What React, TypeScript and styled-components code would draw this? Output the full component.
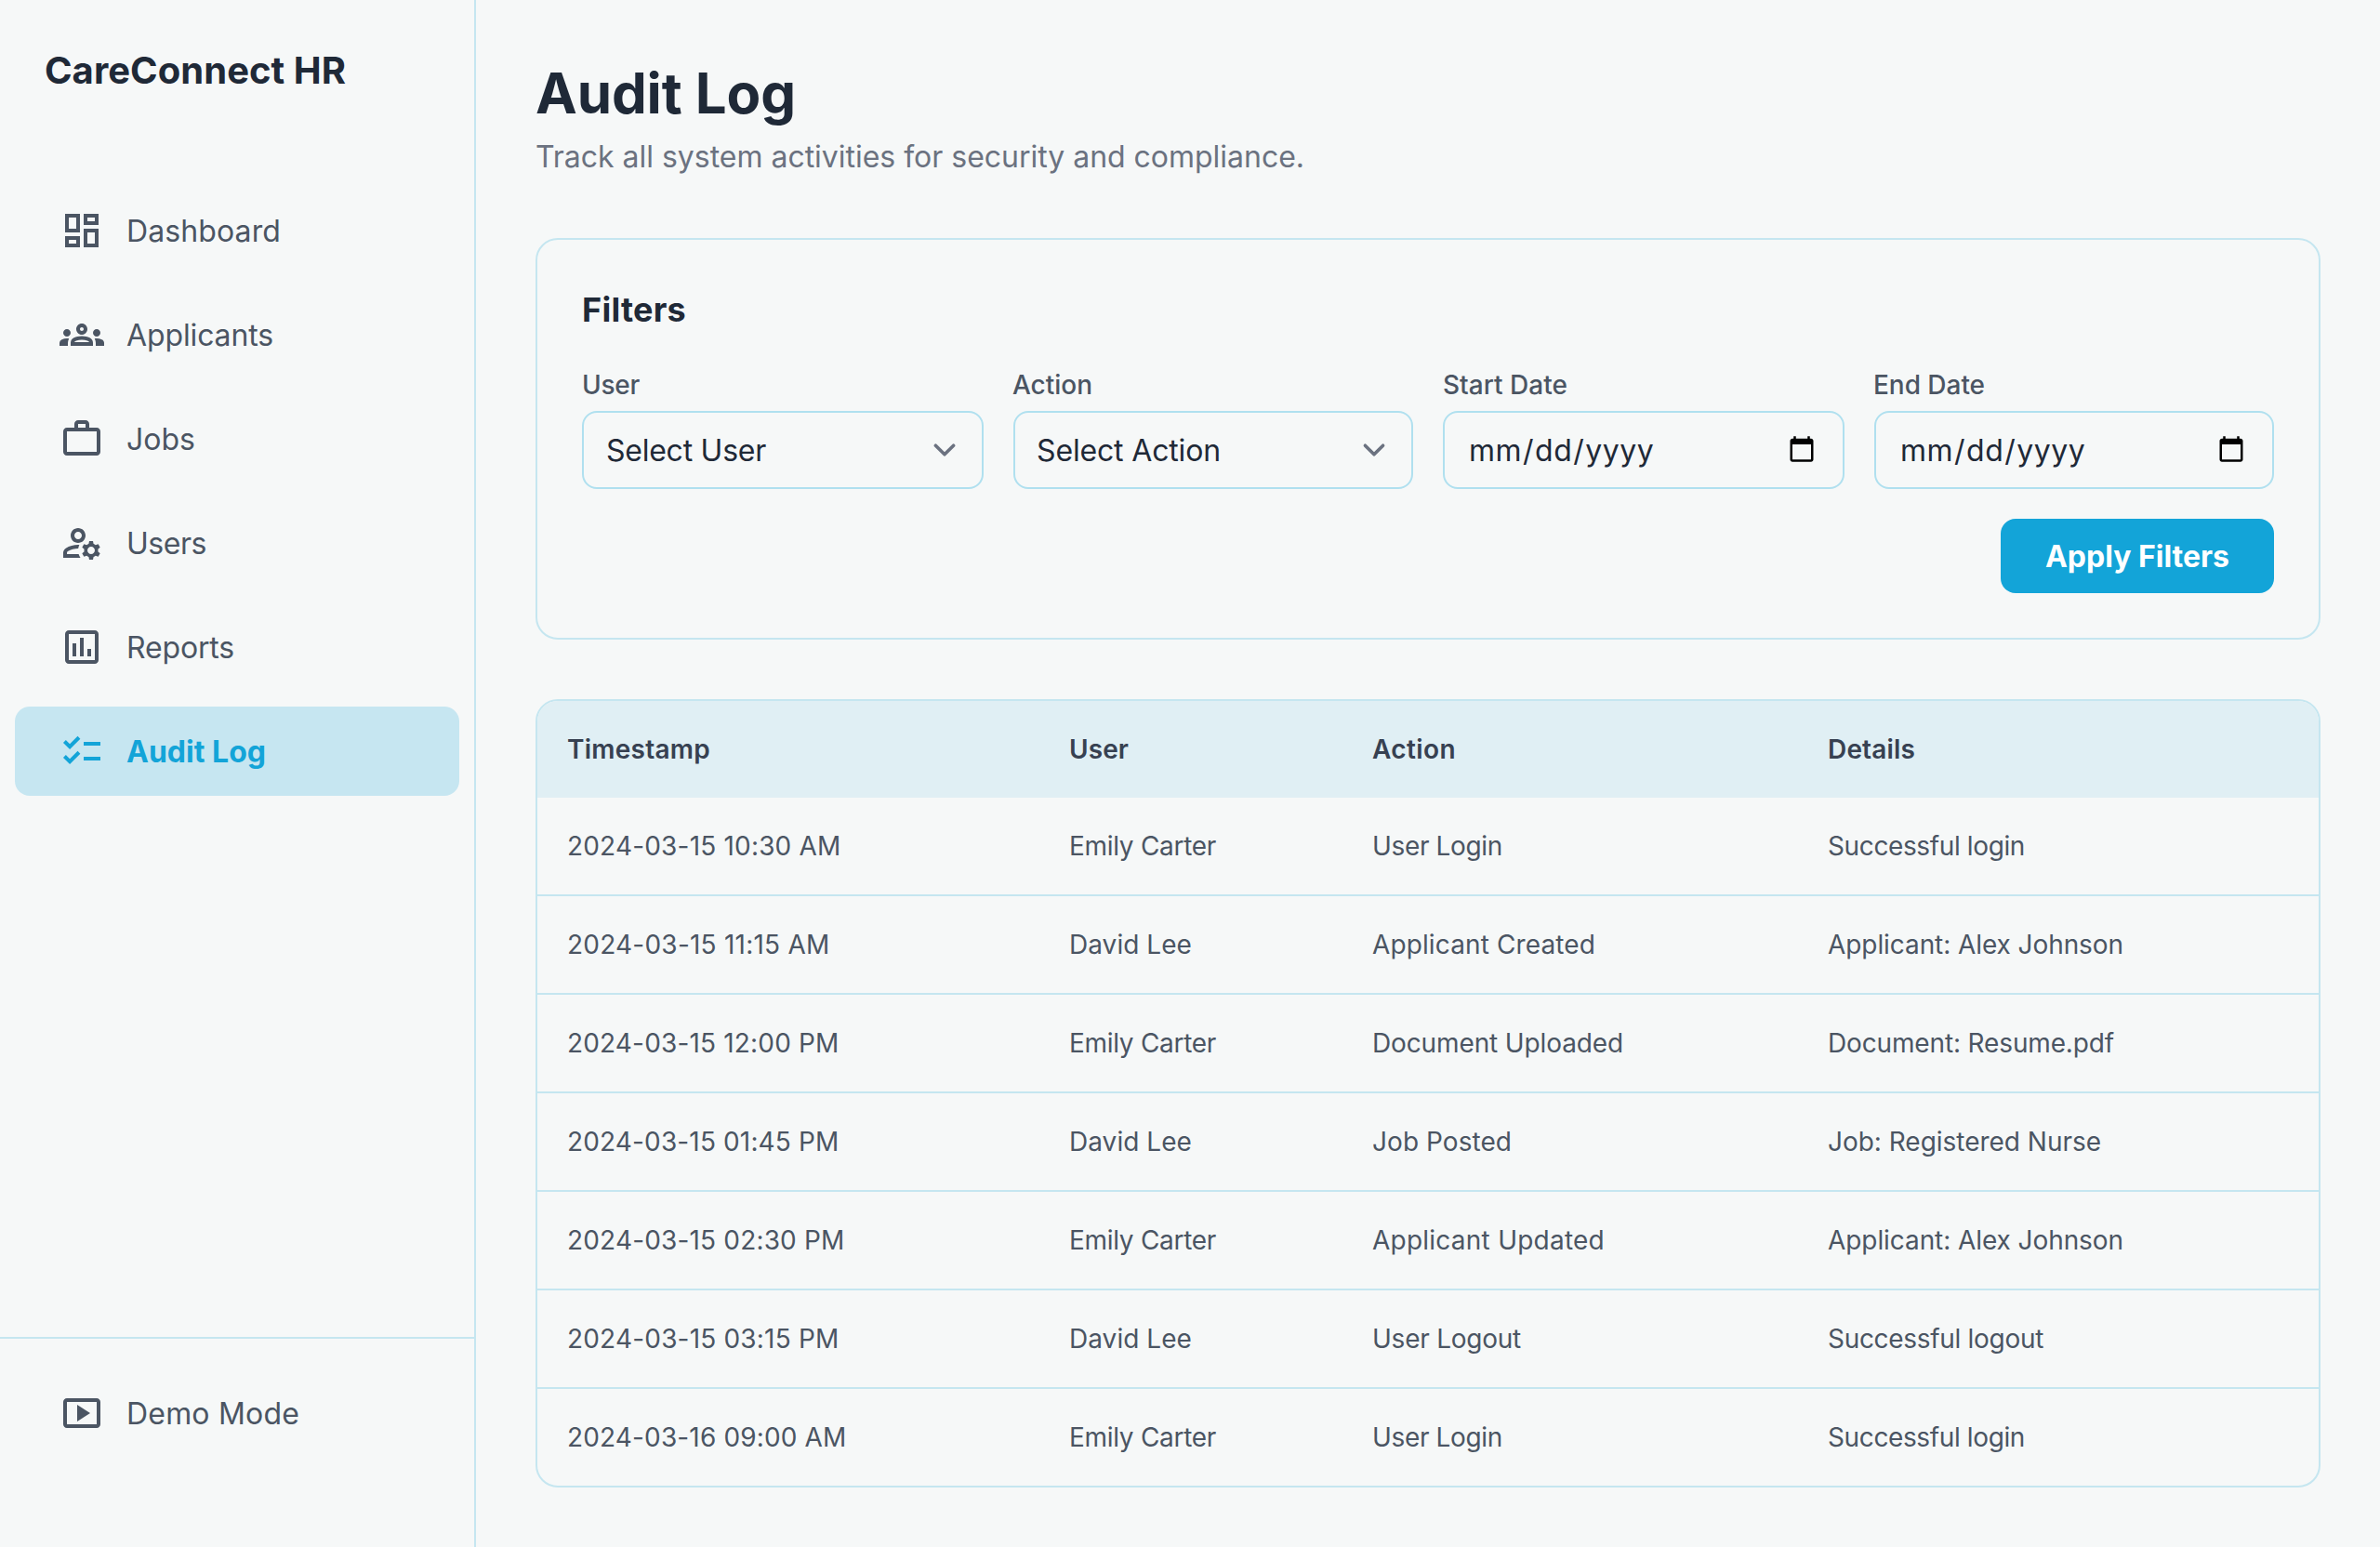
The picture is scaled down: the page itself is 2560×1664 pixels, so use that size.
import React, { useLayoutEffect, useRef } from "react";
import styled, { createGlobalStyle } from "styled-components";
import {
  MdOutlineDashboard,
  MdOutlineGroups,
  MdWorkOutline,
  MdOutlineManageAccounts,
  MdOutlineAssessment,
  MdChecklist,
  MdOutlineSmartDisplay,
} from "react-icons/md";

const GlobalStyle = createGlobalStyle`
  html, body { margin: 0; padding: 0; background: #f6f8f8; }
  body { font-family: Inter, "Noto Sans", sans-serif; color: #1f2937; }
  * { box-sizing: border-box; }
`;

/* The design was laid out at half size with whole-pixel glyph advances and then
   doubled. This spreads each string evenly so that it takes that same width. */
function useDoubledAdvances<T extends HTMLElement>(text: string, nudge = 0) {
  const ref = useRef<T>(null);
  useLayoutEffect(() => {
    const el = ref.current;
    const ctx = document.createElement("canvas").getContext("2d");
    if (!el || !ctx) return;
    const cs = getComputedStyle(el);
    const size = parseFloat(cs.fontSize);
    ctx.font = `${cs.fontWeight} ${size}px ${cs.fontFamily}`;
    const natural = ctx.measureText(text).width;
    ctx.font = `${cs.fontWeight} ${size / 2}px ${cs.fontFamily}`;
    let target = nudge;
    for (const ch of text) target += Math.round(ctx.measureText(ch).width) * 2;
    el.style.letterSpacing = `${(target - natural) / text.length}px`;
  }, [text, nudge]);
  return ref;
}

function Txt({ children, nudge }: { children: string; nudge?: number }) {
  const ref = useDoubledAdvances<HTMLSpanElement>(children, nudge);
  return <span ref={ref}>{children}</span>;
}

const Shell = styled.div`
  display: flex;
  width: 2560px;
  height: 1664px;
  overflow: hidden;
  background: #f6f8f8;
`;

const Sidebar = styled.aside`
  width: 512px;
  flex: none;
  display: flex;
  flex-direction: column;
  border-right: 2px solid #c5e6f0;
`;

const Logo = styled.div`
  padding: 48px 48px 0;
  height: 200px;
  font-size: 40px;
  line-height: 56px;
  font-weight: 700;
  color: #1f2937;
`;

const Nav = styled.nav`
  flex: 1;
  display: flex;
  flex-direction: column;
  gap: 16px;
  padding: 0 16px;
`;

const NavItem = styled.a<{ $active?: boolean }>`
  display: flex;
  align-items: center;
  gap: 24px;
  height: 96px;
  padding: 0 48px;
  border-radius: 16px;
  font-size: 32px;
  line-height: 48px;
  font-weight: ${(p) => (p.$active ? 700 : 400)};
  color: ${(p) => (p.$active ? "#13a4d8" : "#4b5563")};
  background: ${(p) => (p.$active ? "#c6e6f1" : "transparent")};
  svg { flex: none; width: 48px; height: 48px; }
`;

const NavLabel = styled.span`
  padding-top: 2px;
`;

const SidebarFooter = styled.div`
  border-top: 2px solid #c5e6f0;
  padding: 32px 16px 96px;
`;

const Main = styled.main`
  flex: 1;
  min-width: 0;
  padding: 64px;
`;

const PageTitle = styled.h1`
  margin: 0;
  font-size: 60px;
  line-height: 72px;
  font-weight: 700;
  color: #1f2937;
`;

const Subtitle = styled.p`
  margin: 8px 0 64px;
  padding-top: 1px;
  height: 48px;
  font-size: 32px;
  line-height: 48px;
  color: #6b7280;
`;

const FilterCard = styled.section`
  border: 2px solid #c5e6f0;
  border-radius: 24px;
  padding: 48px;
  margin-bottom: 64px;
`;

const FilterTitle = styled.h2`
  margin: 0 0 34px;
  font-size: 36px;
  line-height: 54px;
  font-weight: 700;
  color: #1f2937;
`;

const FilterGrid = styled.div`
  display: grid;
  grid-template-columns: 432px 430px 432px 430px;
  gap: 32px;
`;

const Field = styled.label`
  display: flex;
  flex-direction: column;
  gap: 8px;
  min-width: 0;
`;

const FieldLabel = styled.span<{ $snapped?: boolean }>`
  margin-left: ${(p) => (p.$snapped ? "-1px" : "0")};
  font-size: 28px;
  line-height: 40px;
  font-weight: 500;
  color: #4b5563;
`;

const controlStyle = `
  width: 100%;
  height: 84px;
  border: 2px solid #b0e0ef;
  border-radius: 16px;
  background-color: #f6f8f8;
  color: #1f2937;
  font-family: Inter, "Noto Sans", sans-serif;
  font-size: 32px;
  margin: 0;
  outline: none;
`;

const SelectBox = styled.select<{ $snapped?: boolean }>`
  ${controlStyle}
  padding: 0 24px 0 ${(p) => (p.$snapped ? "23px" : "24px")};
  appearance: none;
  background-image: url("data:image/svg+xml,%3csvg xmlns='http://www.w3.org/2000/svg' fill='none' viewBox='0 0 20 20'%3e%3cpath stroke='%236b7280' stroke-linecap='round' stroke-linejoin='round' stroke-width='1.5' d='M6 8l4 4 4-4'/%3e%3c/svg%3e");
  background-position: right 16px center;
  background-repeat: no-repeat;
  background-size: 48px 48px;
`;

const DateInput = styled.input`
  ${controlStyle}
  padding: 0 24px 0 25px;
  letter-spacing: 0.5px;
  &::-webkit-calendar-picker-indicator {
    width: 32px;
    height: 32px;
    margin: 0 4px 0 0;
    padding: 0;
  }
`;

const Actions = styled.div`
  display: flex;
  justify-content: flex-end;
  margin-top: 32px;
`;

const ApplyButton = styled.button`
  height: 80px;
  padding: 0 48px;
  border: none;
  border-radius: 16px;
  background: #13a4d8;
  color: #ffffff;
  font-family: Inter, "Noto Sans", sans-serif;
  font-size: 32px;
  font-weight: 700;
`;

const TableCard = styled.section`
  border: 2px solid #c5e6f0;
  border-radius: 24px;
  overflow: hidden;
`;

const Table = styled.table`
  width: 100%;
  table-layout: fixed;
  border-collapse: collapse;
`;

const HeadRow = styled.tr`
  background: #e0eff4;
`;

const HeadCell = styled.th<{ $width?: number }>`
  width: ${(p) => (p.$width ? `${p.$width}px` : "auto")};
  padding: 32px;
  text-align: left;
  font-size: 28px;
  line-height: 40px;
  font-weight: 600;
  color: #374151;
`;

const Row = styled.tr`
  border-top: 2px solid #c5e6f0;
  &:first-child { border-top: none; }
`;

const Cell = styled.td`
  padding: 32px;
  font-size: 28px;
  line-height: 40px;
  color: #4b5563;
`;

function Select({ label, snapped }: { label: string; snapped?: boolean }) {
  const ref = useDoubledAdvances<HTMLSelectElement>(label);
  return (
    <SelectBox ref={ref} defaultValue="" $snapped={snapped}>
      <option value="">{label}</option>
    </SelectBox>
  );
}

const rows = [
  ["2024-03-15 10:30 AM", "Emily Carter", "User Login", "Successful login"],
  ["2024-03-15 11:15 AM", "David Lee", "Applicant Created", "Applicant: Alex Johnson"],
  ["2024-03-15 12:00 PM", "Emily Carter", "Document Uploaded", "Document: Resume.pdf"],
  ["2024-03-15 01:45 PM", "David Lee", "Job Posted", "Job: Registered Nurse"],
  ["2024-03-15 02:30 PM", "Emily Carter", "Applicant Updated", "Applicant: Alex Johnson"],
  ["2024-03-15 03:15 PM", "David Lee", "User Logout", "Successful logout"],
  ["2024-03-16 09:00 AM", "Emily Carter", "User Login", "Successful login"],
];

const navItems = [
  { label: "Dashboard", icon: <MdOutlineDashboard /> },
  { label: "Applicants", icon: <MdOutlineGroups /> },
  { label: "Jobs", icon: <MdWorkOutline /> },
  { label: "Users", icon: <MdOutlineManageAccounts /> },
  { label: "Reports", icon: <MdOutlineAssessment /> },
  { label: "Audit Log", icon: <MdChecklist />, active: true },
];

export default function App() {
  return (
    <Shell>
      <GlobalStyle />
      <Sidebar>
        <Logo><Txt>CareConnect HR</Txt></Logo>
        <Nav>
          {navItems.map((n) => (
            <NavItem key={n.label} $active={n.active}>
              {n.icon}
              <NavLabel><Txt>{n.label}</Txt></NavLabel>
            </NavItem>
          ))}
        </Nav>
        <SidebarFooter>
          <NavItem>
            <MdOutlineSmartDisplay />
            <NavLabel><Txt>Demo Mode</Txt></NavLabel>
          </NavItem>
        </SidebarFooter>
      </Sidebar>
      <Main>
        <PageTitle><Txt>Audit Log</Txt></PageTitle>
        <Subtitle><Txt nudge={-3}>Track all system activities for security and compliance.</Txt></Subtitle>
        <FilterCard>
          <FilterTitle><Txt>Filters</Txt></FilterTitle>
          <FilterGrid>
            <Field>
              <FieldLabel><Txt>User</Txt></FieldLabel>
              <Select label="Select User" />
            </Field>
            <Field>
              <FieldLabel $snapped><Txt>Action</Txt></FieldLabel>
              <Select label="Select Action" snapped />
            </Field>
            <Field>
              <FieldLabel><Txt>Start Date</Txt></FieldLabel>
              <DateInput type="date" />
            </Field>
            <Field>
              <FieldLabel $snapped><Txt>End Date</Txt></FieldLabel>
              <DateInput type="date" />
            </Field>
          </FilterGrid>
          <Actions>
            <ApplyButton><Txt>Apply Filters</Txt></ApplyButton>
          </Actions>
        </FilterCard>
        <TableCard>
          <Table>
            <thead>
              <HeadRow>
                <HeadCell $width={540}><Txt>Timestamp</Txt></HeadCell>
                <HeadCell $width={326}><Txt>User</Txt></HeadCell>
                <HeadCell $width={490}><Txt>Action</Txt></HeadCell>
                <HeadCell><Txt>Details</Txt></HeadCell>
              </HeadRow>
            </thead>
            <tbody>
              {rows.map((r, i) => (
                <Row key={i}>
                  {r.map((c, j) => (
                    <Cell key={j}><Txt nudge={j === 0 ? -3.5 : 0}>{c}</Txt></Cell>
                  ))}
                </Row>
              ))}
            </tbody>
          </Table>
        </TableCard>
      </Main>
    </Shell>
  );
}
